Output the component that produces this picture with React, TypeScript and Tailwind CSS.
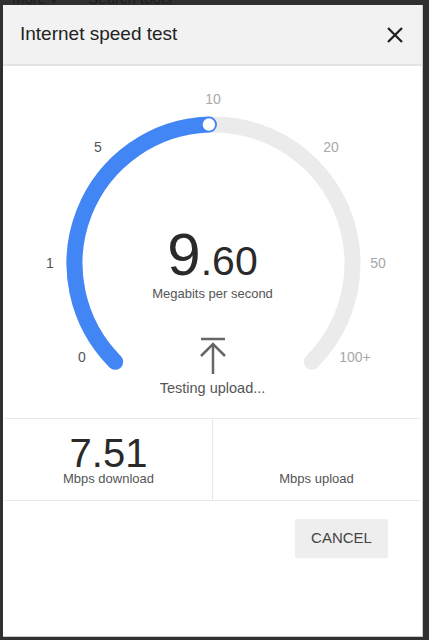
import React from 'react';

const BLUE = '#4285f4';

// gauge geometry, in the gauge box's own coordinates
const CX = 210.5;
const CY = 197.5;
const R = 139;

const labels = [
  { t: '0', x: 79, y: 291, on: true },
  { t: '1', x: 47, y: 197, on: true },
  { t: '5', x: 95, y: 81, on: true },
  { t: '10', x: 210, y: 33, on: false },
  { t: '20', x: 328, y: 81, on: false },
  { t: '50', x: 375, y: 197, on: false },
  { t: '100+', x: 352, y: 291, on: false },
];

function Gauge() {
  const d = R * Math.SQRT1_2;
  const sx = CX - d;
  const ex = CX + d;
  const sy = CY + d;
  // needle sits just before the "10" mark
  const a = (91.9 * Math.PI) / 180;
  const nx = CX + R * Math.cos(a);
  const ny = CY - R * Math.sin(a);

  return (
    <svg className="absolute inset-0" width="419" height="352" viewBox="0 0 419 352">
      <path
        d={`M ${sx} ${sy} A ${R} ${R} 0 1 1 ${ex} ${sy}`}
        fill="none"
        stroke="#ebebeb"
        strokeWidth="16"
        strokeLinecap="round"
      />
      <path
        d={`M ${sx} ${sy} A ${R} ${R} 0 0 1 ${nx} ${ny}`}
        fill="none"
        stroke={BLUE}
        strokeWidth="16"
        strokeLinecap="round"
      />
      <circle cx={nx} cy={ny} r="7" fill="#fff" stroke={BLUE} strokeWidth="1.5" />
      {labels.map((l) => (
        <text
          key={l.t}
          x={l.x}
          y={l.y}
          textAnchor="middle"
          dominantBaseline="central"
          fontSize="14"
          fontFamily="'Liberation Sans', Arial, sans-serif"
          fill={l.on ? '#555' : '#a8a8a8'}
        >
          {l.t}
        </text>
      ))}
    </svg>
  );
}

function UploadIcon() {
  return (
    <svg width="30" height="40" viewBox="0 0 30 40" fill="none" stroke="#666" strokeWidth="2.5">
      <line x1="3" y1="3" x2="27" y2="3" />
      <line x1="15" y1="9" x2="15" y2="38" />
      <polyline points="3,20 15,8 27,20" strokeLinejoin="miter" />
    </svg>
  );
}

export default function App() {
  return (
    <div className="relative h-[640px] w-[429px] overflow-hidden bg-[#303030] font-['Liberation_Sans',Arial,sans-serif]">
      {/* dimmed page behind the dialog */}
      <div className="absolute left-[12px] top-[-10px] flex gap-[30px] text-[15px] leading-[18px] text-[#1e1e1e]">
        <span>More ▾</span>
        <span>Search tools</span>
      </div>

      <div className="absolute left-[3px] top-[5px] flex h-[632px] w-[420px] flex-col border-r border-b border-[#c9c9c9] bg-white">
        <div className="flex h-[61px] shrink-0 items-center justify-between border-b-2 border-[#e4e4e4] bg-[#f2f2f2] pl-[17px] pr-[19px]">
          <h1 className="text-[19px] text-[#222]">Internet speed test</h1>
          <svg width="16" height="16" viewBox="0 0 16 16" stroke="#222" strokeWidth="2.3">
            <line x1="1" y1="1" x2="15" y2="15" />
            <line x1="15" y1="1" x2="1" y2="15" />
          </svg>
        </div>

        <div className="relative h-[352px] shrink-0">
          <Gauge />
          <div className="relative flex flex-col items-center pt-[159px]">
            <div className="flex items-baseline text-[#2a2a2a] leading-none">
              <span className="text-[60px]">9</span>
              <span className="text-[41px]">.60</span>
            </div>
            <div className="mt-[1px] text-[13px] leading-[16px] text-[#555]">Megabits per second</div>
            <div className="mt-[34px]">
              <UploadIcon />
            </div>
            <div className="mt-[3px] text-[14.5px] leading-[18px] text-[#555]">Testing upload...</div>
          </div>
        </div>

        <div className="mx-[2px] flex h-[83px] shrink-0 border-y border-[#e8e8e8]">
          <div className="flex flex-1 flex-col items-center border-r border-[#e8e8e8] pt-[16px]">
            <div className="h-[36px] text-[40px] leading-[36px] text-[#2a2a2a]">7.51</div>
            <div className="mt-[1px] text-[13px] leading-[14px] text-[#555]">Mbps download</div>
          </div>
          <div className="flex flex-1 flex-col items-center pt-[16px]">
            <div className="h-[36px]" />
            <div className="mt-[1px] text-[13px] leading-[14px] text-[#555]">Mbps upload</div>
          </div>
        </div>

        <div className="flex justify-end pr-[34px] pt-[18px]">
          <button className="h-[38px] w-[93px] rounded-[2px] bg-[#eeeeee] text-[15px] text-[#444] shadow-[0_1px_1px_rgba(0,0,0,0.08)]">
            CANCEL
          </button>
        </div>
      </div>
    </div>
  );
}
